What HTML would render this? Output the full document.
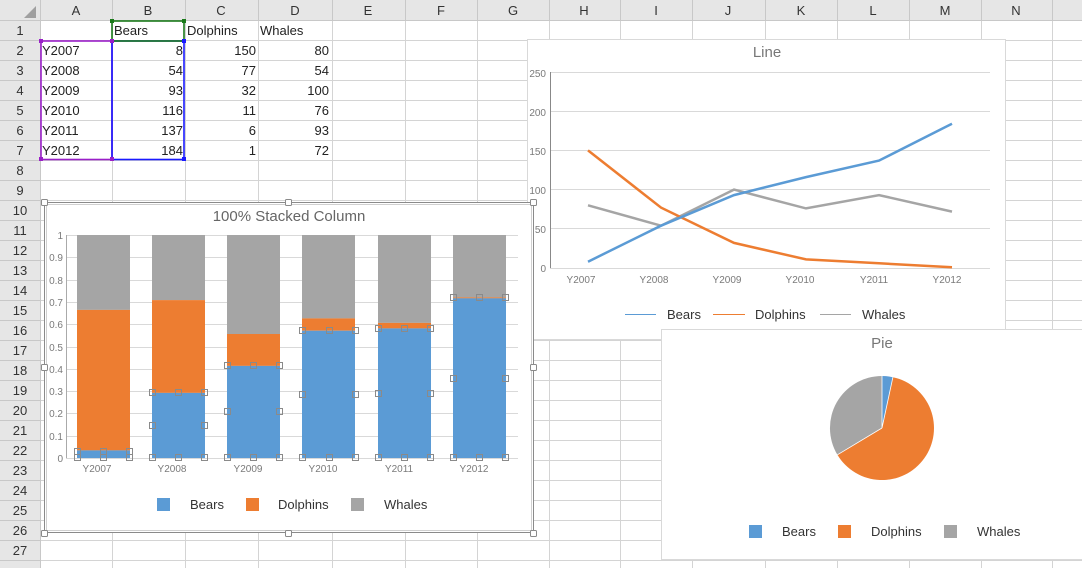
<!DOCTYPE html>
<html><head><meta charset="utf-8"><style>
html,body{margin:0;padding:0;background:#fff;width:1082px;height:568px;overflow:hidden}
svg{display:block;font-family:"Liberation Sans",sans-serif}
.c{font-size:13px;fill:#222}
.h{font-size:13px;fill:#333;text-anchor:middle}
.ax{font-size:10px;fill:#7a7a7a}
.lg{font-size:13px;fill:#333}
.hd{fill:#fff;stroke:#8a8a8a;stroke-width:1}
</style></head><body>
<svg width="1082" height="568" viewBox="0 0 1082 568">
<!-- headers -->
<rect x="0" y="0" width="1082" height="20" fill="#e6e6e6"/>
<rect x="0" y="0" width="40" height="568" fill="#e6e6e6"/>
<polygon points="24,18 36,18 36,6" fill="#a0a0a0"/>
<g stroke="#d4d4d4" stroke-width="1">
<path d="M40.5 20V568M112.5 20V568M185.5 20V568M258.5 20V568M332.5 20V568M405.5 20V568M477.5 20V568M549.5 20V568M620.5 20V568M692.5 20V568M765.5 20V568M837.5 20V568M909.5 20V568M981.5 20V568M1052.5 20V568"/>
<path d="M40 40.5H1082M40 60.5H1082M40 80.5H1082M40 100.5H1082M40 120.5H1082M40 140.5H1082M40 160.5H1082M40 180.5H1082M40 200.5H1082M40 220.5H1082M40 240.5H1082M40 260.5H1082M40 280.5H1082M40 300.5H1082M40 320.5H1082M40 340.5H1082M40 360.5H1082M40 380.5H1082M40 400.5H1082M40 420.5H1082M40 440.5H1082M40 460.5H1082M40 480.5H1082M40 500.5H1082M40 520.5H1082M40 540.5H1082M40 560.5H1082"/>
</g>
<g stroke="#c8c8c8" stroke-width="1">
<path d="M40.5 0V20M112.5 0V20M185.5 0V20M258.5 0V20M332.5 0V20M405.5 0V20M477.5 0V20M549.5 0V20M620.5 0V20M692.5 0V20M765.5 0V20M837.5 0V20M909.5 0V20M981.5 0V20M1052.5 0V20"/>
<path d="M0 40.5H40M0 60.5H40M0 80.5H40M0 100.5H40M0 120.5H40M0 140.5H40M0 160.5H40M0 180.5H40M0 200.5H40M0 220.5H40M0 240.5H40M0 260.5H40M0 280.5H40M0 300.5H40M0 320.5H40M0 340.5H40M0 360.5H40M0 380.5H40M0 400.5H40M0 420.5H40M0 440.5H40M0 460.5H40M0 480.5H40M0 500.5H40M0 520.5H40M0 540.5H40M0 560.5H40"/>
<path d="M0 20.5H1082M40.5 0V568"/>
</g>
<g class="h">
<text x="76" y="15">A</text><text x="148" y="15">B</text><text x="221" y="15">C</text><text x="295" y="15">D</text><text x="368" y="15">E</text><text x="441" y="15">F</text><text x="513" y="15">G</text><text x="584" y="15">H</text><text x="656" y="15">I</text><text x="728" y="15">J</text><text x="801" y="15">K</text><text x="873" y="15">L</text><text x="945" y="15">M</text><text x="1016" y="15">N</text>
<text x="20" y="35">1</text><text x="20" y="55">2</text><text x="20" y="75">3</text><text x="20" y="95">4</text><text x="20" y="115">5</text><text x="20" y="135">6</text><text x="20" y="155">7</text><text x="20" y="175">8</text><text x="20" y="195">9</text><text x="20" y="215">10</text><text x="20" y="235">11</text><text x="20" y="255">12</text><text x="20" y="275">13</text><text x="20" y="295">14</text><text x="20" y="315">15</text><text x="20" y="335">16</text><text x="20" y="355">17</text><text x="20" y="375">18</text><text x="20" y="395">19</text><text x="20" y="415">20</text><text x="20" y="435">21</text><text x="20" y="455">22</text><text x="20" y="475">23</text><text x="20" y="495">24</text><text x="20" y="515">25</text><text x="20" y="535">26</text><text x="20" y="555">27</text>
</g>
<!-- cells -->
<g class="c">
<text x="114" y="35">Bears</text><text x="187" y="35">Dolphins</text><text x="260" y="35">Whales</text>
<text x="42" y="55">Y2007</text><text x="42" y="75">Y2008</text><text x="42" y="95">Y2009</text><text x="42" y="115">Y2010</text><text x="42" y="135">Y2011</text><text x="42" y="155">Y2012</text>
</g>
<g class="c" text-anchor="end">
<text x="183" y="55">8</text><text x="183" y="75">54</text><text x="183" y="95">93</text><text x="183" y="115">116</text><text x="183" y="135">137</text><text x="183" y="155">184</text>
<text x="256" y="55">150</text><text x="256" y="75">77</text><text x="256" y="95">32</text><text x="256" y="115">11</text><text x="256" y="135">6</text><text x="256" y="155">1</text>
<text x="329" y="55">80</text><text x="329" y="75">54</text><text x="329" y="95">100</text><text x="329" y="115">76</text><text x="329" y="135">93</text><text x="329" y="155">72</text>
</g>
<rect x="41" y="41" width="71" height="118.5" fill="none" stroke="#9a1fc8" stroke-width="1.6"/>
<rect x="112" y="41" width="72" height="118.5" fill="none" stroke="#1a1aff" stroke-width="1.6"/>
<rect x="112" y="21" width="72" height="20" fill="none" stroke="#1a7a1a" stroke-width="1.6"/>
<g fill="#9a1fc8"><rect x="39" y="39" width="4" height="4"/><rect x="39" y="157" width="4" height="4"/><rect x="110" y="157" width="4" height="4"/><rect x="110" y="39" width="4" height="4"/></g>
<g fill="#1a1aff"><rect x="182" y="157" width="4" height="4"/><rect x="182" y="39" width="4" height="4"/></g>
<g fill="#1a7a1a"><rect x="110" y="19" width="4" height="4"/><rect x="182" y="19" width="4" height="4"/></g>

<!-- Line chart -->
<rect x="527.5" y="39.5" width="478" height="300" fill="#fff" stroke="#d9d9d9"/>
<svg x="528" y="40" width="477" height="299" viewBox="528 40 477 299" overflow="hidden">
<text x="767" y="57" text-anchor="middle" font-size="15" fill="#777">Line</text>
<g stroke="#d9d9d9"><path d="M550 72.5H990M550 111.5H990M550 150.5H990M550 189.5H990M550 228.5H990M550 268.5H990"/></g>
<path d="M550.5 72V268" stroke="#888"/>
<g class="ax" text-anchor="end"><text x="546" y="77">250</text><text x="546" y="116">200</text><text x="546" y="155">150</text><text x="546" y="194">100</text><text x="546" y="233">50</text><text x="546" y="272">0</text></g>
<g class="ax" text-anchor="middle"><text x="581" y="283">Y2007</text><text x="654" y="283">Y2008</text><text x="727" y="283">Y2009</text><text x="800" y="283">Y2010</text><text x="874" y="283">Y2011</text><text x="947" y="283">Y2012</text></g>
<polyline fill="none" stroke="#a5a5a5" stroke-width="2.5" points="588,205.3 661,225.7 734,189.6 806,208.4 879,195.1 952,211.6"/>
<polyline fill="none" stroke="#ed7d31" stroke-width="2.5" points="588,150.4 661,207.6 734,242.9 806,259.4 879,263.3 952,267.2"/>
<polyline fill="none" stroke="#5b9bd5" stroke-width="2.5" points="588,261.7 661,225.7 734,195.1 806,177.1 879,160.6 952,123.7"/>
<path d="M625 314.5H656" stroke="#5b9bd5"/><path d="M713 314.5H745" stroke="#ed7d31"/><path d="M820 314.5H851" stroke="#a5a5a5"/>
<g class="lg"><text x="667" y="319">Bears</text><text x="755" y="319">Dolphins</text><text x="862" y="319">Whales</text></g>
</svg>

<!-- Pie chart -->
<rect x="661.5" y="329.5" width="425" height="230" fill="#fff" stroke="#d9d9d9"/>
<text x="882" y="348" text-anchor="middle" font-size="15" fill="#777">Pie</text>
<path d="M882 428L882 376A52 52 0 0 1 892.9 377.2Z" fill="#5b9bd5"/>
<path d="M882 428L892.9 377.2A52 52 0 1 1 837.4 454.8Z" fill="#ed7d31"/>
<path d="M882 428L837.4 454.8A52 52 0 0 1 882 376Z" fill="#a5a5a5"/>
<path d="M882 428L892.9 377.2M882 428L837.4 454.8M882 428V376" stroke="#fff" stroke-width="0.8"/>
<rect x="749" y="525" width="13" height="13" fill="#5b9bd5"/><rect x="838" y="525" width="13" height="13" fill="#ed7d31"/><rect x="944" y="525" width="13" height="13" fill="#a5a5a5"/>
<g class="lg"><text x="782" y="536">Bears</text><text x="871" y="536">Dolphins</text><text x="977" y="536">Whales</text></g>

<!-- Stacked column chart -->
<rect x="44" y="202" width="490" height="331" fill="#fff"/>
<rect x="44.5" y="202.5" width="489" height="330" fill="none" stroke="#8a8a8a"/>
<rect x="46.5" y="204.5" width="485" height="326" fill="none" stroke="#d0d0d0"/>
<text x="289" y="221" text-anchor="middle" font-size="15" fill="#666">100% Stacked Column</text>
<g stroke="#d9d9d9"><path d="M66 235.5H518M66 257.5H518M66 280.5H518M66 302.5H518M66 324.5H518M66 347.5H518M66 369.5H518M66 391.5H518M66 413.5H518M66 436.5H518M66 458.5H518"/></g>
<path d="M66.5 235V458" stroke="#aaa"/>
<g class="ax" text-anchor="end" fill="#595959"><text x="63" y="239">1</text><text x="63" y="261">0.9</text><text x="63" y="284">0.8</text><text x="63" y="306">0.7</text><text x="63" y="328">0.6</text><text x="63" y="351">0.5</text><text x="63" y="373">0.4</text><text x="63" y="395">0.3</text><text x="63" y="417">0.2</text><text x="63" y="440">0.1</text><text x="63" y="462">0</text></g>
<g>
<rect x="77" y="235" width="53" height="74.9" fill="#a5a5a5"/><rect x="77" y="309.9" width="53" height="140.5" fill="#ed7d31"/><rect x="77" y="450.4" width="53" height="7.6" fill="#5b9bd5"/>
<rect x="152" y="235" width="53" height="65.1" fill="#a5a5a5"/><rect x="152" y="300.1" width="53" height="92.8" fill="#ed7d31"/><rect x="152" y="392.9" width="53" height="65.1" fill="#5b9bd5"/>
<rect x="227" y="235" width="53" height="99" fill="#a5a5a5"/><rect x="227" y="334" width="53" height="31.9" fill="#ed7d31"/><rect x="227" y="365.9" width="53" height="92.1" fill="#5b9bd5"/>
<rect x="302" y="235" width="53" height="83.4" fill="#a5a5a5"/><rect x="302" y="318.4" width="53" height="12.3" fill="#ed7d31"/><rect x="302" y="330.7" width="53" height="127.3" fill="#5b9bd5"/>
<rect x="378" y="235" width="53" height="87.9" fill="#a5a5a5"/><rect x="378" y="322.9" width="53" height="5.5" fill="#ed7d31"/><rect x="378" y="328.4" width="53" height="129.6" fill="#5b9bd5"/>
<rect x="453" y="235" width="53" height="62.4" fill="#a5a5a5"/><rect x="453" y="297.4" width="53" height="1" fill="#ed7d31"/><rect x="453" y="298.3" width="53" height="159.7" fill="#5b9bd5"/>
</g>
<g class="ax" text-anchor="middle"><text x="97" y="472">Y2007</text><text x="172" y="472">Y2008</text><text x="248" y="472">Y2009</text><text x="323" y="472">Y2010</text><text x="399" y="472">Y2011</text><text x="474" y="472">Y2012</text></g>
<!-- data handles -->
<g fill="none" stroke="#8a8a8a">
<rect x="74.5" y="448.5" width="6" height="6"/><rect x="100.5" y="448.5" width="6" height="6"/><rect x="126.5" y="448.5" width="6" height="6"/>
<rect x="74.5" y="454.5" width="6" height="6"/><rect x="100.5" y="454.5" width="6" height="6"/><rect x="126.5" y="454.5" width="6" height="6"/>
<rect x="149.5" y="389.5" width="6" height="6"/><rect x="175.5" y="389.5" width="6" height="6"/><rect x="201.5" y="389.5" width="6" height="6"/>
<rect x="149.5" y="422.5" width="6" height="6"/><rect x="201.5" y="422.5" width="6" height="6"/>
<rect x="149.5" y="454.5" width="6" height="6"/><rect x="175.5" y="454.5" width="6" height="6"/><rect x="201.5" y="454.5" width="6" height="6"/>
<rect x="224.5" y="362.5" width="6" height="6"/><rect x="250.5" y="362.5" width="6" height="6"/><rect x="276.5" y="362.5" width="6" height="6"/>
<rect x="224.5" y="408.5" width="6" height="6"/><rect x="276.5" y="408.5" width="6" height="6"/>
<rect x="224.5" y="454.5" width="6" height="6"/><rect x="250.5" y="454.5" width="6" height="6"/><rect x="276.5" y="454.5" width="6" height="6"/>
<rect x="299.5" y="327.5" width="6" height="6"/><rect x="326.5" y="327.5" width="6" height="6"/><rect x="352.5" y="327.5" width="6" height="6"/>
<rect x="299.5" y="391.5" width="6" height="6"/><rect x="352.5" y="391.5" width="6" height="6"/>
<rect x="299.5" y="454.5" width="6" height="6"/><rect x="326.5" y="454.5" width="6" height="6"/><rect x="352.5" y="454.5" width="6" height="6"/>
<rect x="375.5" y="325.5" width="6" height="6"/><rect x="401.5" y="325.5" width="6" height="6"/><rect x="427.5" y="325.5" width="6" height="6"/>
<rect x="375.5" y="390.5" width="6" height="6"/><rect x="427.5" y="390.5" width="6" height="6"/>
<rect x="375.5" y="454.5" width="6" height="6"/><rect x="401.5" y="454.5" width="6" height="6"/><rect x="427.5" y="454.5" width="6" height="6"/>
<rect x="450.5" y="294.5" width="6" height="6"/><rect x="476.5" y="294.5" width="6" height="6"/><rect x="502.5" y="294.5" width="6" height="6"/>
<rect x="450.5" y="375.5" width="6" height="6"/><rect x="502.5" y="375.5" width="6" height="6"/>
<rect x="450.5" y="454.5" width="6" height="6"/><rect x="476.5" y="454.5" width="6" height="6"/><rect x="502.5" y="454.5" width="6" height="6"/>
</g>
<rect x="157" y="498" width="13" height="13" fill="#5b9bd5"/><rect x="246" y="498" width="13" height="13" fill="#ed7d31"/><rect x="351" y="498" width="13" height="13" fill="#a5a5a5"/>
<g class="lg"><text x="190" y="509">Bears</text><text x="278" y="509">Dolphins</text><text x="384" y="509">Whales</text></g>
<!-- frame handles -->
<g class="hd">
<rect x="41.5" y="199.5" width="6" height="6" rx="1"/><rect x="285.5" y="199.5" width="6" height="6" rx="1"/><rect x="530.5" y="199.5" width="6" height="6" rx="1"/>
<rect x="41.5" y="364.5" width="6" height="6" rx="1"/><rect x="530.5" y="364.5" width="6" height="6" rx="1"/>
<rect x="41.5" y="530.5" width="6" height="6" rx="1"/><rect x="285.5" y="530.5" width="6" height="6" rx="1"/><rect x="530.5" y="530.5" width="6" height="6" rx="1"/>
</g>
</svg>
</body></html>
